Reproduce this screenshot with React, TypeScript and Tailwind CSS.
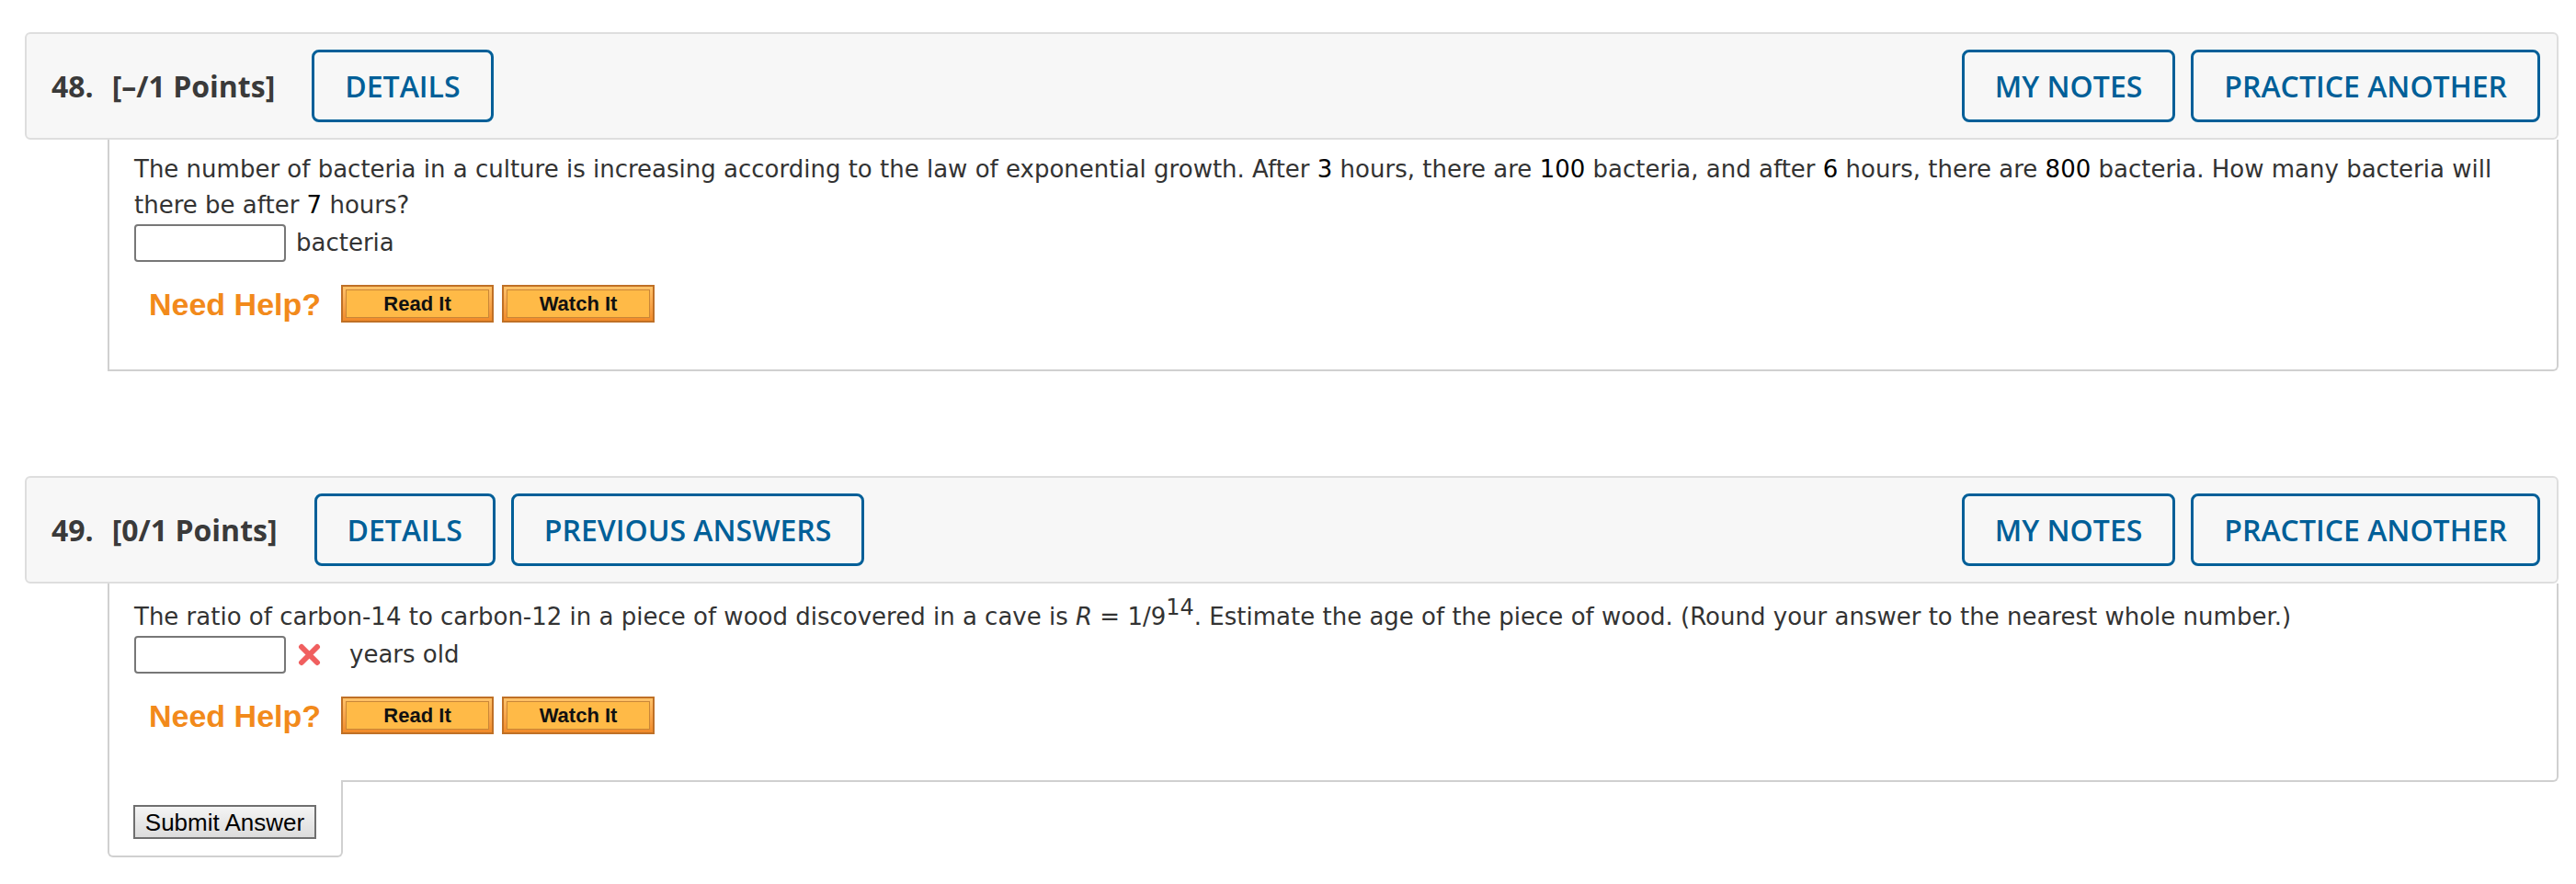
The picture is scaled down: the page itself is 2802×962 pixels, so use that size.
import React from "react";

function BlueButton({ label }: { label: string }) {
  return (
    <div className="h-[79px] px-[33px] border-[3px] border-[#005f98] rounded-[8px] flex items-center text-[#005f98] font-semibold text-[32px] leading-none font-['Open_Sans',sans-serif] whitespace-nowrap">
      {label}
    </div>
  );
}

function Header({ num, pts, left }: { num: string; pts: string; left: string[] }) {
  return (
    <div className="flex items-center bg-[#f7f7f7] border-2 border-[#dedede] rounded-[6px] pl-[27px] pr-[18px] py-[17px] font-['Open_Sans',sans-serif]">
      <span className="font-bold text-[32px] leading-none text-[#3a3a3a]">{num}</span>
      <span className="ml-[20px] font-bold text-[32px] leading-none text-[#3a3a3a]">{pts}</span>
      <div className="ml-[40px] flex gap-[17px]">
        {left.map((l) => (
          <BlueButton key={l} label={l} />
        ))}
      </div>
      <div className="ml-auto flex gap-[17px]">
        <BlueButton label="MY NOTES" />
        <BlueButton label="PRACTICE ANOTHER" />
      </div>
    </div>
  );
}

function OrangeButton({ label }: { label: string }) {
  return (
    <div className="w-[166px] h-[41px] border-2 border-[#bf7026] bg-linear-to-b from-[#ffc36a] to-[#f08a28] p-[3px]">
      <div className="w-full h-full border border-[#c98637] bg-[#ffba47] flex items-center justify-center font-['Liberation_Sans',Arial,sans-serif] font-bold text-[22px] leading-none text-[#111]">
        {label}
      </div>
    </div>
  );
}

function NeedHelp() {
  return (
    <div className="mt-[25px] ml-[16px] flex items-center">
      <span className="font-['Liberation_Sans',Arial,sans-serif] font-bold text-[34px] leading-none text-[#f28a1b]">
        Need Help?
      </span>
      <div className="ml-[22px] flex gap-[9px]">
        <OrangeButton label="Read It" />
        <OrangeButton label="Watch It" />
      </div>
    </div>
  );
}

function AnswerBox() {
  return (
    <input
      type="text"
      readOnly
      className="w-[165px] h-[41px] border-2 border-[#777777] rounded-[4px] bg-white outline-none"
    />
  );
}

export default function App() {
  return (
    <div className="min-h-screen bg-white pt-[35px] pl-[27px] pr-[19px] font-['DejaVu_Sans',Verdana,sans-serif]">
      {/* Question 48 */}
      <Header num="48." pts="[–/1 Points]" left={["DETAILS"]} />
      <div className="ml-[90px] bg-white border-x-2 border-b-2 border-[#d0d0d0] rounded-br-[6px] pl-[27px] pr-[27px] pt-[13px] pb-[51px] text-[26px] leading-[39px] text-[#333333]">
        <p className="whitespace-nowrap">
          The number of bacteria in a culture is increasing according to the law of exponential growth. After{" "}
          <span className="text-black">3</span> hours, there are <span className="text-black">100</span> bacteria, and
          after <span className="text-black">6</span> hours, there are <span className="text-black">800</span> bacteria.
          How many bacteria will
          <br />
          there be after <span className="text-black">7</span> hours?
        </p>
        <div className="mt-[1px] flex items-center">
          <AnswerBox />
          <span className="ml-[11px]">bacteria</span>
        </div>
        <NeedHelp />
      </div>

      {/* Question 49 */}
      <div className="mt-[114px]">
        <Header num="49." pts="[0/1 Points]" left={["DETAILS", "PREVIOUS ANSWERS"]} />
        <div className="ml-[90px] bg-white border-x-2 border-b-2 border-[#d0d0d0] rounded-br-[6px] pl-[27px] pr-[27px] pt-[17px] pb-[50px] text-[26px] leading-[39px] text-[#333333]">
          <p className="whitespace-nowrap">
            The ratio of carbon-14 to carbon-12 in a piece of wood discovered in a cave is <i>R</i> = 1/9
            <sup className="text-[24px] top-[-0.45em]">14</sup>. Estimate the age of the piece of wood. (Round your
            answer to the nearest whole number.)
          </p>
          <div className="mt-[1px] flex items-center">
            <AnswerBox />
            <svg width="27" height="25" viewBox="0 0 27 25" className="ml-[12px]">
              <path
                d="M5 4 L22 21 M22 4 L5 21"
                stroke="#f05f5f"
                strokeWidth="6"
                strokeLinecap="round"
                fill="none"
              />
            </svg>
            <span className="ml-[30px]">years old</span>
          </div>
          <NeedHelp />
        </div>
        <div className="relative ml-[90px] -mt-[2px] w-[256px] bg-white border-x-2 border-b-2 border-[#d0d0d0] rounded-b-[6px] pt-[27px] pb-[18px] pl-[26px]">
          <button className="w-[199px] h-[37px] border-2 border-[#6f6f6f] bg-linear-to-b from-[#f4f4f4] to-[#dcdcdc] font-['Liberation_Sans',Arial,sans-serif] text-[26px] leading-none text-black">
            Submit Answer
          </button>
        </div>
      </div>
    </div>
  );
}
